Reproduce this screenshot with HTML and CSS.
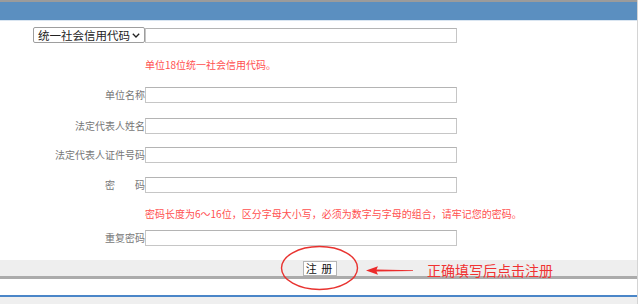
FILE: index.html
```html
<!DOCTYPE html>
<html lang="zh-CN">
<head>
<meta charset="utf-8">
<title>注册</title>
<link rel="stylesheet" href="styles.css">
</head>
<body>
<div class="page">
  <div class="topbar"></div>
  <div class="form">
    <div class="row r-sel">
      <div class="lab">
        <div class="sel">统一社会信用代码<svg class="chev" width="8" height="5" viewBox="0 0 8 5"><path d="M0.8 0.8 L4 4 L7.2 0.8" fill="none" stroke="#222" stroke-width="1.3"/></svg></div>
      </div>
      <input class="inp inp-sel" type="text">
    </div>
    <div class="hint h-1">单位18位统一社会信用代码。</div>
    <div class="row r-1"><div class="lab">单位名称</div><input class="inp" type="text"></div>
    <div class="row r-2"><div class="lab">法定代表人姓名</div><input class="inp" type="text"></div>
    <div class="row r-3"><div class="lab">法定代表人证件号码</div><input class="inp" type="text"></div>
    <div class="row r-4"><div class="lab">密　　码</div><input class="inp" type="password"></div>
    <div class="hint h-2">密码长度为6～16位，区分字母大小写，必须为数字与字母的组合，请牢记您的密码。</div>
    <div class="row r-5"><div class="lab">重复密码</div><input class="inp" type="password"></div>
  </div>
  <div class="band"><button class="btn" type="button">注 册</button></div>
  <div class="foot"></div>
  <div class="below"></div>

  <svg class="mark" width="640" height="304" viewBox="0 0 640 304">
    <ellipse cx="319.5" cy="268" rx="38" ry="21.5" fill="none" stroke="#e8322f" stroke-width="1.4"/>
    <polygon points="366,270.5 378,266.3 376.5,269.6 413,270.2 413,270.9 376.5,271.5 378,274.8" fill="#ec2b2b"/>
  </svg>
  <span class="note">正确填写后点击注册</span>
</div>
</body>
</html>
```

FILE: styles.css
```css
* { box-sizing: border-box; }
html, body { margin: 0; padding: 0; background: #fff; }
body { width: 640px; height: 304px; overflow: hidden; }

.page {
  position: relative;
  width: 638px;
  height: 304px;
  border-right: 1px solid #d4d4d4;
  font-family: "Noto Sans CJK SC", "Noto Sans", sans-serif;
}

.topbar {
  height: 21px;
  background: #5b8fc0;
  border-top: 2px solid #9b9b9b;
  border-bottom: 1px solid #d9e5f1;
}

.form {
  display: flex;
  flex-direction: column;
  padding-top: 6px;
}

.row {
  display: flex;
  align-items: center;
  height: 16px;
}

.lab {
  width: 145px;
  flex: none;
  display: flex;
  justify-content: flex-end;
  font-size: 10px;
  line-height: 16px;
  color: #777;
  white-space: nowrap;
}

.sel {
  width: 112px;
  height: 16px;
  display: flex;
  align-items: center;
  justify-content: space-between;
  padding: 0 4px 0 4px;
  border: 1px solid #9e9e9e;
  border-radius: 2px;
  background: #fff;
  font-size: 11.5px;
  color: #222;
  line-height: 14px;
}
.chev { flex: none; margin-top: 1px; }

.inp {
  display: block;
  width: 312px;
  height: 16px;
  margin: 0;
  padding: 0;
  border: 1px solid #c6c6c6;
  border-top-color: #b4b4b4;
  background: #fff;
  outline: none;
}
.inp-sel { height: 15px; }

.hint {
  padding-left: 145px;
  height: 14px;
  font-size: 10px;
  line-height: 14px;
  color: #ff4f4f;
  white-space: nowrap;
}

.h-1 { margin-top: 15px; }
.r-1 { margin-top: 15px; }
.r-2 { margin-top: 15px; }
.r-3 { margin-top: 13px; }
.r-4 { margin-top: 14px; }
.h-2 { margin-top: 14px; }
.r-5 { margin-top: 9px; }

.band {
  margin-top: 14px;
  height: 19px;
  background: #eeeeee;
  border-bottom: 3px solid #ababab;
  display: flex;
  justify-content: center;
  align-items: flex-start;
}

.btn {
  margin: 1px 0 0 2px;
  width: 34px;
  height: 15px;
  padding: 0;
  border: 1px solid #b5b5b5;
  background: #fff;
  font-family: "Noto Sans CJK SC", sans-serif;
  font-size: 11px;
  line-height: 13px;
  color: #111;
  letter-spacing: 1px;
}

.foot {
  height: 18px;
  background: #fff;
  border-bottom: 2px solid #4a86c8;
}

.below {
  height: 7px;
  background: #efefef;
}

.mark {
  position: absolute;
  left: 0;
  top: 0;
  pointer-events: none;
}

.note {
  position: absolute;
  left: 427px;
  top: 261px;
  font-size: 14px;
  line-height: 18px;
  color: #f03232;
  white-space: nowrap;
}
```
